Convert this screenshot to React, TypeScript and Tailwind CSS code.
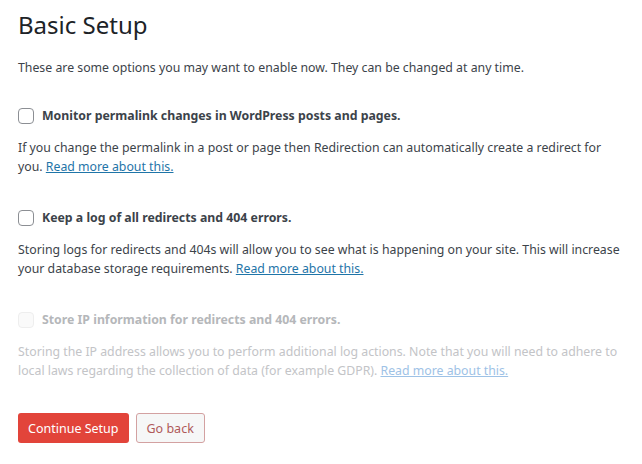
export default function App() {
  const options = [
    {
      label: "Monitor permalink changes in WordPress posts and pages.",
      text: "If you change the permalink in a post or page then Redirection can automatically create a redirect for you.",
      disabled: false,
    },
    {
      label: "Keep a log of all redirects and 404 errors.",
      text: "Storing logs for redirects and 404s will allow you to see what is happening on your site. This will increase your database storage requirements.",
      disabled: false,
    },
    {
      label: "Store IP information for redirects and 404 errors.",
      text: "Storing the IP address allows you to perform additional log actions. Note that you will need to adhere to local laws regarding the collection of data (for example GDPR).",
      disabled: true,
    },
  ];

  return (
    <div
      className="min-h-[464px] w-[642px] bg-white px-[18px] pt-[8px] text-[12.3px] leading-[19px] text-[#3c434a]"
      style={{ fontFamily: '"Noto Sans", "Open Sans", sans-serif' }}
    >
      <h1 className="text-[24px] leading-[34px] font-normal text-[#1d2327]">Basic Setup</h1>

      <p className="mt-[16px]">
        These are some options you may want to enable now. They can be changed at any time.
      </p>

      <div className="mt-[29px] space-y-[32px]">
        {options.map((opt) => (
          <div key={opt.label} className={opt.disabled ? "text-[#c3c4c7]" : ""}>
            <label className="flex items-center gap-[8px] font-bold">
              <span
                className={
                  "h-4 w-4 shrink-0 rounded-[4px] border " +
                  (opt.disabled ? "border-[#eeeeee] bg-[#fafafa]" : "border-[#8c8f94] bg-white")
                }
              />
              <span className={opt.disabled ? "text-[#b5b7ba]" : "text-[#3c434a]"}>{opt.label}</span>
            </label>
            <p className="mt-[13px]">
              {opt.text}{" "}
              <a href="#" className={"underline " + (opt.disabled ? "text-[#9ec2e6]" : "text-[#1f75a8]")}>
                Read more about this.
              </a>
            </p>
          </div>
        ))}
      </div>

      <div className="mt-[33px] flex gap-[7px]">
        <button className="h-[30px] rounded-[3px] bg-[#e2443a] px-[10px] text-[12.5px] text-white">Continue Setup</button>
        <button className="h-[30px] rounded-[3px] border border-[#d3a1a1] bg-[#f6f7f7] px-[10px] text-[12.5px] text-[#b05a5a]">
          Go back
        </button>
      </div>
    </div>
  );
}
